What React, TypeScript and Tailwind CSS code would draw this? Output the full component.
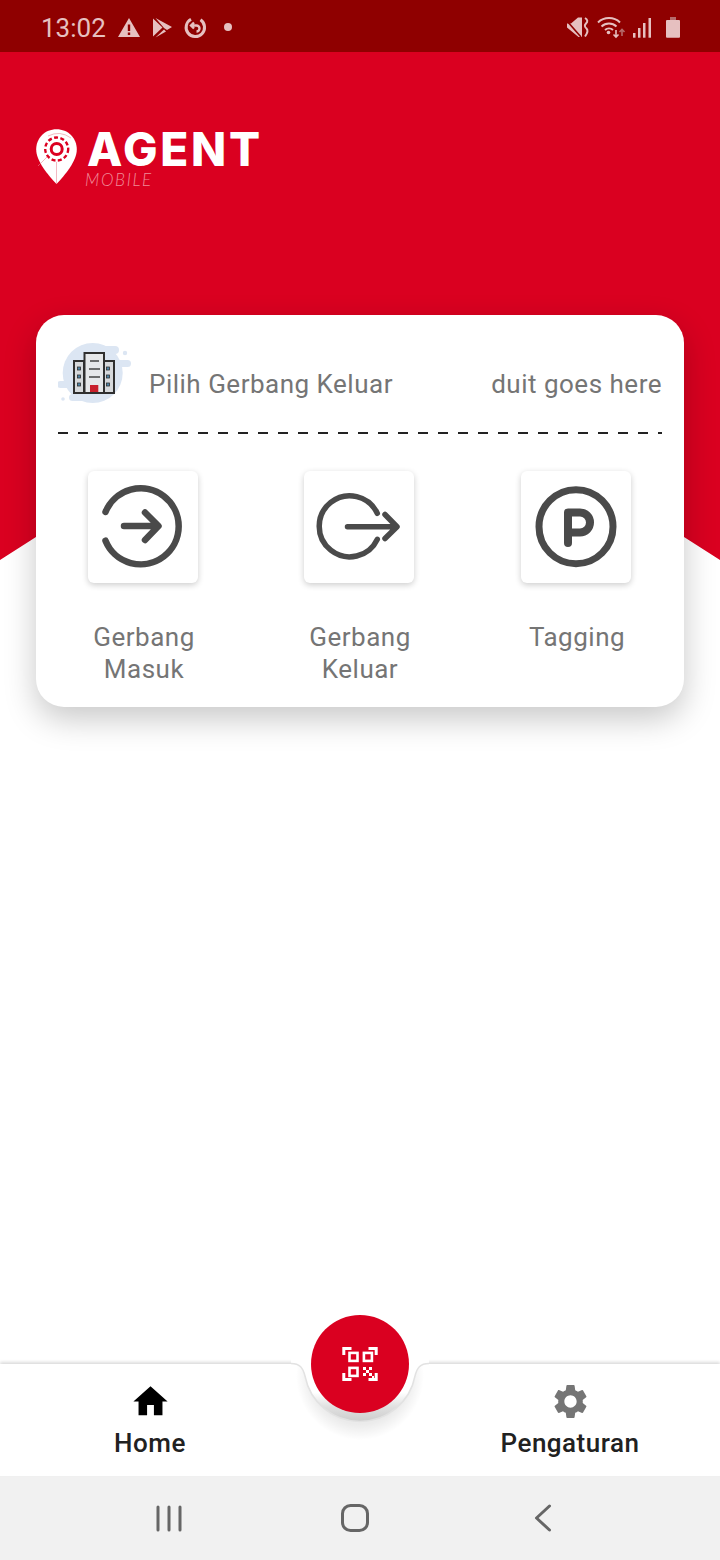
import { MdHome, MdSettings } from 'react-icons/md';

const StatusLeftIcons = () => (
  <svg width="116" height="24" viewBox="118 16 116 24" className="ml-[13px]">
    <path
      fillRule="evenodd"
      fill="#e6c0c0"
      d="M129 18 L140 37 H118 Z M127.8 24.5 V31 H130.2 V24.5 Z M127.8 32.5 V35 H130.2 V32.5 Z"
    />
    <path fill="#e6c0c0" d="M153 18.5 L162.5 27.5 L153 36.5 Z M155.5 18 L172 27 L167 30 L164 28 Z M155.5 37.5 L166 31.5 L164 29.5 Z" />
    <path fill="none" stroke="#e6c0c0" strokeWidth="3" d="M200.5 19.8 A 9.2 9.2 0 1 1 191 19.3" />
    <path fill="none" stroke="#e6c0c0" strokeWidth="2.4" d="M191.5 25.5 H196.5 A 3 3 0 0 1 196.5 31.5 M194 22.5 L191 25.5 L194 28.5" />
    <circle cx="228" cy="27" r="4" fill="#e6c0c0" />
  </svg>
);

const StatusRightIcons = () => (
  <svg width="117" height="26" viewBox="565 15 117 26">
    <path fill="#e6c0c0" d="M567 23.5 H571 L578 17.5 H582 V37 H578.5 L567 27.5 Z" />
    <path fill="none" stroke="#8f0000" strokeWidth="1.6" d="M567 21 L581 37" />
    <path fill="none" stroke="#e6c0c0" strokeWidth="2" d="M585 18 Q589 20.5 586 23.5 Q583.5 26 586.5 28.5 Q589 31 585 36.5" />
    <path fill="none" stroke="#e6c0c0" strokeWidth="2" d="M598 22.5 A 16 16 0 0 1 620 22.5 M601.5 26.5 A 11 11 0 0 1 616.5 26.5 M605 30 A 6 6 0 0 1 613 30" />
    <circle cx="608.5" cy="32.5" r="1.8" fill="#e6c0c0" />
    <path fill="none" stroke="#e6c0c0" strokeWidth="1.6" d="M616 30 V36.5 M613.5 34.5 L616 37 L618.5 34.5" />
    <path fill="none" stroke="#b56a6a" strokeWidth="1.6" d="M622 36 V30 M619.5 32 L622 29.5 L624.5 32" />
    <rect x="633" y="33" width="2.5" height="4.7" fill="#e6c0c0" />
    <rect x="638" y="28" width="2.5" height="9.7" fill="#e6c0c0" />
    <rect x="643" y="23" width="2.5" height="14.7" fill="#e6c0c0" />
    <rect x="648.5" y="18" width="2.5" height="19.7" fill="#e6c0c0" />
    <rect x="670" y="17" width="6" height="4" fill="#b56a6a" />
    <rect x="666" y="20" width="14" height="17.7" rx="1" fill="#e6c0c0" />
  </svg>
);

const LogoPin = () => (
  <svg width="41" height="55" viewBox="36 129 41 55" className="shrink-0">
    <path fill="#fff" d="M56.5 129.3 C68 129.3 76.8 138 76.8 149.5 C76.8 161 65 175 56.5 184 C48 175 36.2 161 36.2 149.5 C36.2 138 45 129.3 56.5 129.3 Z" />
    <circle cx="56.7" cy="149" r="11.5" fill="none" stroke="#dc0021" strokeWidth="2.4" strokeDasharray="4 2.4" />
    <circle cx="56.7" cy="149" r="5.5" fill="none" stroke="#dc0021" strokeWidth="3" />
    <path fill="none" stroke="#e98a98" strokeWidth="0.6" d="M56.5 162 V184 M47 157 L38 166 M48 136 Q60 130 71 138" />
  </svg>
);

const BuildingIcon = () => (
  <svg width="74" height="60" viewBox="58 343 74 60" className="self-start shrink-0">
    <g fill="#dce6f3">
      <circle cx="92.7" cy="373" r="30" />
      <rect x="100" y="346" width="19" height="8" rx="4" />
      <rect x="104" y="360" width="27" height="7" rx="3.5" />
      <rect x="57" y="381" width="30" height="7" rx="3.5" />
      <rect x="69" y="394" width="26" height="7" rx="3.5" />
      <circle cx="125" cy="353" r="2.2" />
      <circle cx="63" cy="399" r="1.8" />
    </g>
    <g stroke="#2f2f2f" strokeWidth="2">
      <rect x="74" y="361" width="10" height="32" fill="#d6d9dc" />
      <rect x="104" y="361" width="10" height="32" fill="#d6d9dc" />
      <rect x="84.5" y="353" width="19.5" height="40" fill="#e6e8ea" />
    </g>
    <path stroke="#444" strokeWidth="1.4" d="M90 361 H99 M89 369 H100 M89 377 H100" />
    <g fill="#4f86a8" stroke="#2f2f2f" strokeWidth="0.8">
      <rect x="77.5" y="367" width="3" height="3" />
      <rect x="77.5" y="375" width="3" height="3" />
      <rect x="77.5" y="383" width="3" height="3" />
      <rect x="106.5" y="367" width="3" height="3" />
      <rect x="106.5" y="375" width="3" height="3" />
      <rect x="106.5" y="383" width="3" height="3" />
    </g>
    <rect x="90" y="385" width="8.3" height="8" fill="#c8202c" />
    <path stroke="#2f2f2f" strokeWidth="2" d="M73 393 H115" />
  </svg>
);

const GateInIcon = () => (
  <svg width="110" height="112" viewBox="88 471 110 112" fill="none" stroke="#4a4a4a" strokeWidth="6.5" strokeLinecap="round" strokeLinejoin="round">
    <path d="M105.5 512 A 38 38 0 1 1 105.5 540.7" />
    <path d="M124 526 H158 M145 512.5 L158.5 526 L145 540" />
  </svg>
);

const GateOutIcon = () => (
  <svg width="110" height="112" viewBox="304 471 110 112" fill="none" stroke="#4a4a4a" strokeWidth="5.5" strokeLinecap="round" strokeLinejoin="round">
    <path d="M377.3 513.3 A 30.5 30.5 0 1 0 377.3 539.3" />
    <path d="M347.5 526.7 H396 M385 514.5 L397 526.7 L385 538.5" />
  </svg>
);

const ParkingIcon = () => (
  <svg width="110" height="112" viewBox="521 471 110 112" fill="none" stroke="#4a4a4a" strokeLinecap="round" strokeLinejoin="round">
    <circle cx="576" cy="526.7" r="37" strokeWidth="7" />
    <path strokeWidth="8" d="M568 543 V512.5 H580 A 10 10 0 0 1 580 532.5 H568" />
  </svg>
);

const QrIcon = () => (
  <svg width="36" height="36" viewBox="342 1346 36 36" fill="none" stroke="#fff">
    <path strokeWidth="3" d="M343.8 1355 V1348.5 H351.5 M368.5 1348.5 H376.2 V1355 M343.8 1373 V1379.5 H351.5 M368.5 1379.5 H376.2 V1373" />
    <rect x="349.5" y="1352.9" width="8" height="8" strokeWidth="2.6" />
    <rect x="363.9" y="1352.9" width="8" height="8" strokeWidth="2.6" />
    <rect x="349.5" y="1367.9" width="8" height="8" strokeWidth="2.6" />
    <g fill="#fff" stroke="none">
      <rect x="363" y="1367" width="3" height="3" />
      <rect x="369" y="1367" width="3" height="3" />
      <rect x="366" y="1370" width="3" height="3" />
      <rect x="363" y="1373" width="3" height="3" />
      <rect x="369" y="1373" width="3" height="3" />
      <rect x="372" y="1376" width="2" height="2" />
    </g>
  </svg>
);

const menu = [
  { label: ['Gerbang', 'Masuk'], icon: <GateInIcon /> },
  { label: ['Gerbang', 'Keluar'], icon: <GateOutIcon /> },
  { label: ['Tagging'], icon: <ParkingIcon /> },
];

export default function App() {
  return (
    <div className="relative flex h-[1560px] w-[720px] flex-col overflow-hidden bg-white font-['Roboto',sans-serif]">
      {/* Status bar */}
      <div className="flex h-[52px] shrink-0 items-center justify-between bg-[#8f0000] pl-[41px] pr-[38px] pt-[4px] text-[26px] text-[#e6c0c0]">
        <div className="flex items-center">
          <span className="w-[64px]">13:02</span>
          <StatusLeftIcons />
        </div>
        <StatusRightIcons />
      </div>

      {/* Red header */}
      <div className="h-[508px] shrink-0 bg-[#da0020] [clip-path:polygon(0_0,100%_0,100%_100%,50%_278px,0_100%)]">
        <div className="flex items-start pl-[36px] pt-[77px]">
          <LogoPin />
          <div className="ml-[10px] flex flex-col">
            <span className="font-['Inter',sans-serif] text-[46px] font-extrabold leading-[40px] tracking-[2.7px] text-white">AGENT</span>
            <span className="ml-[-2px] mt-[2px] font-['Lato',sans-serif] text-[17px] font-light italic leading-[18px] tracking-[1.6px] text-[#f08a98]">MOBILE</span>
          </div>
        </div>
      </div>

      {/* Card */}
      <div className="relative mx-[36px] -mt-[245px] h-[392px] shrink-0 rounded-[28px] bg-white shadow-[0_12px_32px_rgba(0,0,0,0.22)]">
        <div className="mx-[22px] mt-[28px] flex h-[82px] items-center text-[26px] tracking-[0.5px] text-[#757575]">
          <BuildingIcon />
          <span className="ml-[17px]">Pilih Gerbang Keluar</span>
          <span className="ml-auto">duit goes here</span>
        </div>
        <div className="mx-[22px] mt-[7px] h-[2px] bg-[repeating-linear-gradient(90deg,#222_0_10px,transparent_10px_20px)]" />
        <div className="mt-[37px] grid grid-cols-[214px_218px_216px]">
          {menu.map((item) => (
            <div key={item.label.join(' ')} className="flex flex-col items-center">
              <div className="h-[112px] w-[110px] rounded-[6px] bg-white shadow-[0_2px_6px_rgba(0,0,0,0.2)]">{item.icon}</div>
              <p className="ml-[2px] mt-[38px] text-center text-[26px] leading-[32px] tracking-[0.5px] text-[#757575]">
                {item.label.map((line) => (
                  <span key={line} className="block">{line}</span>
                ))}
              </p>
            </div>
          ))}
        </div>
      </div>

      <div className="flex-1" />

      {/* Bottom navigation */}
      <div className="relative flex h-[112px] shrink-0 bg-white shadow-[0_-2px_3px_rgba(0,0,0,0.14)]">
        <div className="flex w-[300px] flex-col items-center pt-[17px]">
          <MdHome size={41} color="#000" />
          <span className="-mt-[1px] text-[26px] font-medium leading-[44px] tracking-[0.5px] text-[#212121]">Home</span>
        </div>
        <div className="w-[120px]" />
        <div className="flex w-[300px] flex-col items-center pt-[17px]">
          <MdSettings size={41} color="#757575" />
          <span className="-mt-[1px] text-[26px] font-medium leading-[44px] tracking-[0.5px] text-[#212121]">Pengaturan</span>
        </div>

        {/* Notch around the scan button */}
        <svg width="150" height="90" viewBox="285 1350 150 90" className="absolute left-[285px] top-[-14px]">
          <defs>
            <linearGradient id="notch" x1="0" y1="0" x2="0" y2="1">
              <stop offset="0.5" stopColor="#ffffff" />
              <stop offset="0.75" stopColor="#e0e0e0" />
              <stop offset="1" stopColor="#cdcdcd" />
            </linearGradient>
            <radialGradient id="notchShade" cx="0.5" cy="0.5" r="0.5">
              <stop offset="0.75" stopColor="#000" stopOpacity="0.08" />
              <stop offset="1" stopColor="#000" stopOpacity="0" />
            </radialGradient>
          </defs>
          <circle cx="360" cy="1376" r="64" fill="url(#notchShade)" />
          <rect x="291" y="1350" width="138" height="14" fill="#fff" />
          <path
            fill="url(#notch)"
            stroke="#e2e2e2"
            strokeWidth="1.5"
            d="M291 1363.5 C300 1363.5 303 1368 305 1376 A 56 56 0 0 0 415 1376 C417 1368 420 1363.5 429 1363.5"
          />
        </svg>

        <button className="absolute left-[311px] top-[-49px] flex h-[98px] w-[98px] items-center justify-center rounded-full bg-[#da0020]">
          <QrIcon />
        </button>
      </div>

      {/* System navigation */}
      <div className="flex h-[84px] shrink-0 items-center bg-[#f1f1f1]">
        <div className="flex w-[337px] items-center justify-center">
          <svg width="26" height="27" viewBox="0 0 26 27" fill="none" stroke="#666" strokeWidth="3" strokeLinecap="round">
            <path d="M2 2 V25 M13 2 V25 M24 2 V25" />
          </svg>
        </div>
        <svg width="28" height="28" viewBox="0 0 28 28" fill="none" stroke="#666" strokeWidth="3" className="ml-[4px]">
          <rect x="1.5" y="1.5" width="25" height="25" rx="8" />
        </svg>
        <svg width="18" height="28" viewBox="0 0 18 28" fill="none" stroke="#666" strokeWidth="3" strokeLinecap="round" strokeLinejoin="round" className="ml-[165px]">
          <path d="M15.5 2 L2.5 14 L15.5 26" />
        </svg>
      </div>
    </div>
  );
}
